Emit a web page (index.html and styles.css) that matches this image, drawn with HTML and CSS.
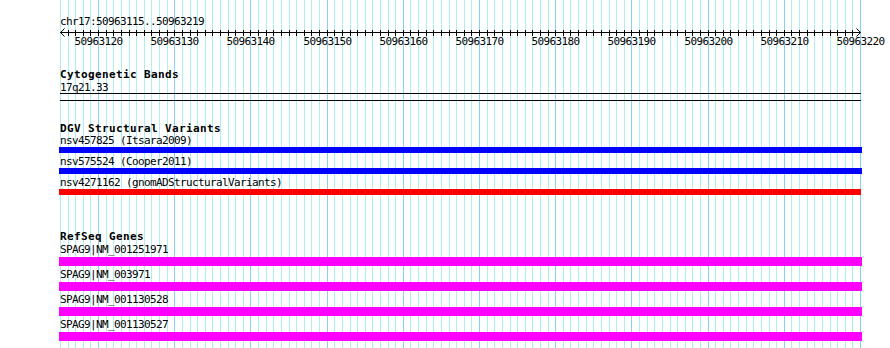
FILE: index.html
```html
<!DOCTYPE html>
<html lang="en">
<head>
    <meta charset="UTF-8">
    <meta name="viewport" content="width=device-width, initial-scale=1.0">
    <title>chr17:50963115..50963219</title>
    <link rel="stylesheet" href="styles.css">
</head>
<body>
    <div class="panel">
        <svg class="grid" id="grid" width="890" height="348"></svg>
        <div class="tracks">
            <div class="ruler">
                <div class="ruler-name">chr17:50963115..50963219</div>
                <svg class="axis" id="axis" width="890" height="20"></svg>
            </div>

            <div class="track cyto">
                <div class="track-title">Cytogenetic Bands</div>
                <div class="feat-label">17q21.33</div>
                <div class="band"></div>
            </div>

            <div class="track dgv">
                <div class="track-title">DGV Structural Variants</div>
                <div class="feat">
                    <div class="feat-label">nsv457825 (Itsara2009)</div>
                    <div class="bar bar-blue"></div>
                </div>
                <div class="feat">
                    <div class="feat-label">nsv575524 (Cooper2011)</div>
                    <div class="bar bar-blue"></div>
                </div>
                <div class="feat">
                    <div class="feat-label">nsv4271162 (gnomADStructuralVariants)</div>
                    <div class="bar bar-red"></div>
                </div>
            </div>

            <div class="track refseq">
                <div class="track-title">RefSeq Genes</div>
                <div class="feat">
                    <div class="feat-label">SPAG9|NM_001251971</div>
                    <div class="bar bar-gene"></div>
                </div>
                <div class="feat">
                    <div class="feat-label">SPAG9|NM_003971</div>
                    <div class="bar bar-gene"></div>
                </div>
                <div class="feat">
                    <div class="feat-label">SPAG9|NM_001130528</div>
                    <div class="bar bar-gene"></div>
                </div>
                <div class="feat">
                    <div class="feat-label">SPAG9|NM_001130527</div>
                    <div class="bar bar-gene"></div>
                </div>
            </div>
        </div>
    </div>
    <script>
        // escala: 105 pb em 800 px, a partir de x=60
        const start = 50963115;
        const left = 60;
        const scale = 800 / 105;
        const ns = 'http://www.w3.org/2000/svg';

        function add(parent, tag, attrs, text) {
            const el = document.createElementNS(ns, tag);
            for (const k in attrs) el.setAttribute(k, attrs[k]);
            if (text) el.textContent = text;
            parent.appendChild(el);
            return el;
        }

        const grid = document.getElementById('grid');
        const axis = document.getElementById('axis');
        const ay = 3.5;

        for (let k = 0; k <= 105; k++) {
            const pos = start + k;
            const x = Math.round(left + k * scale) + 0.5;
            const major = pos % 10 === 0;
            add(grid, 'line', {
                x1: x, y1: 0, x2: x, y2: 348,
                class: major ? 'grid-major' : 'grid-minor'
            });
            if (k > 0 && k < 105) {
                add(axis, 'line', { x1: x, y1: ay - 3, x2: x, y2: ay + 3, class: 'tick' });
            }
            if (major) {
                add(axis, 'text', { x: x, y: 16, class: 'tick-label' }, String(pos));
            }
        }

        add(axis, 'line', { x1: left, y1: ay, x2: left + 800, y2: ay, class: 'tick' });
        add(axis, 'polyline', { points: '64.5,-0.5 60.5,3.5 64.5,7.5', class: 'arrow' });
        add(axis, 'polyline', { points: '856.5,-0.5 860.5,3.5 856.5,7.5', class: 'arrow' });
    </script>
</body>
</html>
```

FILE: styles.css
```css
body {
  margin: 0;
  background-color: #fff;
  font-family: "DejaVu Sans Mono", "Liberation Mono", monospace;
  color: #000;
}
.panel {
  position: relative;
  width: 890px;
  height: 348px;
  overflow: hidden;
}
.grid {
  position: absolute;
  top: 0;
  left: 0;
}
.grid line {
  shape-rendering: crispEdges;
  stroke-width: 1;
}
.grid-minor {
  stroke: #afeeee;
}
.grid-major {
  stroke: #87cefa;
}
.tracks {
  position: relative;
}
.ruler {
  padding-top: 15px;
}
.ruler-name {
  margin-left: 60px;
  font-size: 11px;
  line-height: 14px;
  letter-spacing: -0.62px;
}
.axis {
  display: block;
  overflow: visible;
}
.tick {
  stroke: #000;
  stroke-width: 1;
  shape-rendering: crispEdges;
}
.arrow {
  fill: none;
  stroke: #000;
  stroke-width: 1;
}
.tick-label {
  font-family: "DejaVu Sans Mono", monospace;
  font-size: 11px;
  letter-spacing: -0.62px;
  text-anchor: middle;
}
.track-title {
  margin-left: 60px;
  font-size: 11px;
  font-weight: bold;
  line-height: 13px;
  letter-spacing: 0.38px;
}
.feat-label {
  margin-left: 60px;
  font-size: 11px;
  line-height: 12px;
  letter-spacing: -0.62px;
  white-space: nowrap;
}
.cyto {
  margin-top: 19px;
}
.cyto .feat-label {
  line-height: 13px;
}
.band {
  margin: -1px 0 0 60px;
  width: 801px;
  height: 6px;
  border-top: 1px solid #000;
  border-bottom: 1px solid #000;
}
.dgv {
  margin-top: 21px;
}
.dgv .feat {
  margin-bottom: 3px;
}
.refseq {
  margin-top: 35px;
}
.refseq .track-title {
  margin-bottom: 2px;
}
.refseq .feat {
  margin-bottom: 4px;
}
.refseq .feat-label {
  line-height: 10px;
  padding-bottom: 2px;
}
.bar {
  margin-left: 59px;
  width: 803px;
}
.bar-blue {
  height: 6px;
  background-color: #0000ff;
}
.bar-red {
  height: 6px;
  width: 802px;
  background-color: #ff0000;
}
.bar-gene {
  height: 9px;
  background-color: #ff00ff;
}
```
